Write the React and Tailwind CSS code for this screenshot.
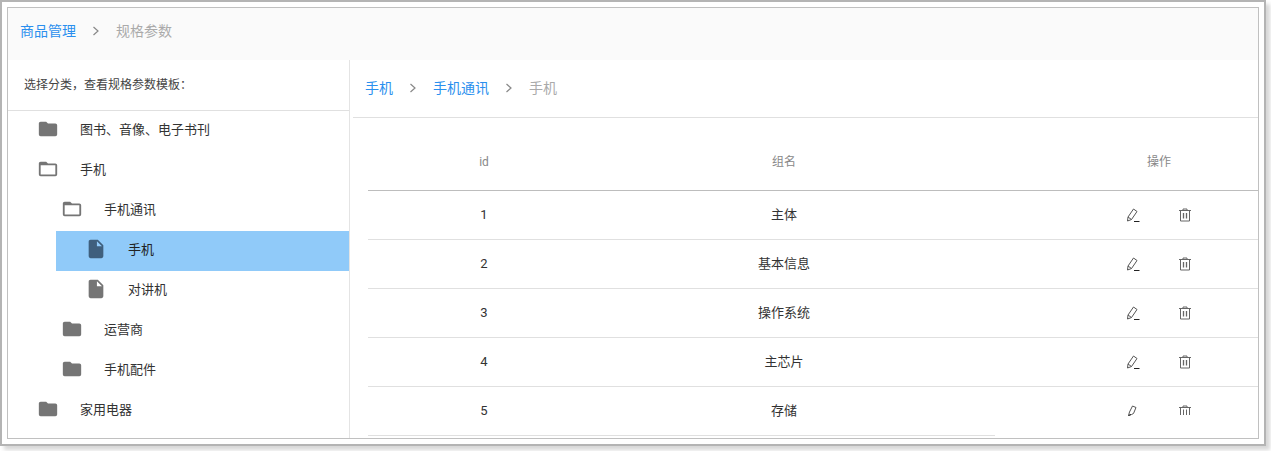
const TREE = [
  { label: "图书、音像、电子书刊", depth: 0, icon: "folder" },
  { label: "手机", depth: 0, icon: "open" },
  { label: "手机通讯", depth: 1, icon: "open" },
  { label: "手机", depth: 2, icon: "file", active: true },
  { label: "对讲机", depth: 2, icon: "file" },
  { label: "运营商", depth: 1, icon: "folder" },
  { label: "手机配件", depth: 1, icon: "folder" },
  { label: "家用电器", depth: 0, icon: "folder" },
];

const ROWS = [
  { id: 1, name: "主体" },
  { id: 2, name: "基本信息" },
  { id: 3, name: "操作系统" },
  { id: 4, name: "主芯片" },
  { id: 5, name: "存储", faded: true },
];

const DEPTH_MARGIN = ["ml-0", "ml-6", "ml-12"];

function TreeIcon({ type, active }) {
  const fill = active ? "#3f5f7d" : "#757575";
  if (type === "file") {
    return (
      <svg width="22" height="22" viewBox="0 0 24 24" fill={fill}>
        <path d="M13 9V3.5L18.5 9M6 2c-1.11 0-2 .89-2 2v16a2 2 0 0 0 2 2h12a2 2 0 0 0 2-2V8l-6-6H6z" />
      </svg>
    );
  }
  if (type === "open") {
    return (
      <svg width="22" height="22" viewBox="0 0 24 24" fill={fill}>
        <path d="M20 18H4V8h16m0-2h-8l-2-2H4c-1.11 0-2 .89-2 2v12a2 2 0 0 0 2 2h16a2 2 0 0 0 2-2V8a2 2 0 0 0-2-2z" />
      </svg>
    );
  }
  return (
    <svg width="22" height="22" viewBox="0 0 24 24" fill={fill}>
      <path d="M10 4H4c-1.11 0-2 .89-2 2v12a2 2 0 0 0 2 2h16a2 2 0 0 0 2-2V8a2 2 0 0 0-2-2h-8l-2-2z" />
    </svg>
  );
}

function PencilIcon({ faded }) {
  if (faded) {
    return (
      <svg width="16" height="16" viewBox="0 0 16 16" fill="none" stroke="#555" strokeWidth="1">
        <path d="M3.5 12.5 4.5 9 7.5 3l3.5 1.5-2.5 6-2 1z" />
        <path d="M3.5 12.5 6 11.5" stroke="#222" />
      </svg>
    );
  }
  return (
    <svg width="16" height="16" viewBox="0 0 16 16" fill="none" stroke="#555" strokeWidth="1">
      <path d="M2.5 14 3 10 8.5 2 12 4.5 6.5 12.5z" />
      <path d="M3 10l3.5 2.5" />
      <path d="M9 14.5h5.5" stroke="#222" />
    </svg>
  );
}

function TrashIcon({ faded }) {
  if (faded) {
    return (
      <svg width="16" height="16" viewBox="0 0 16 16" fill="none" stroke="#666" strokeWidth="1">
        <path d="M2 4.5h12M6 4.5V3h4v1.5" />
        <path d="M3.5 4.5V12M12.5 4.5V12M6.5 6.5V12M9.5 6.5V12" />
      </svg>
    );
  }
  return (
    <svg width="16" height="16" viewBox="0 0 16 16" fill="none" stroke="#666" strokeWidth="1">
      <path d="M2 3.5h12M6 3.5V2h4v1.5" />
      <path d="M3.5 3.5v10.5h9V3.5" />
      <path d="M6.5 6v5.5M9.5 6v5.5" strokeWidth="1.3" />
    </svg>
  );
}

function Sep() {
  return (
    <svg width="8" height="10" viewBox="0 0 8 10" fill="none" stroke="#888" strokeWidth="1.2">
      <path d="M1.5 1 6 5 1.5 9" />
    </svg>
  );
}

export default function App() {
  return (
    <div
      className="h-[451px] w-[1271px] overflow-hidden bg-white text-[13px] text-[#333]"
      style={{ fontFamily: '"Roboto", "Noto Sans CJK SC", sans-serif' }}
    >
      <div className="h-[446px] w-[1266px] border-2 border-[#b4b4b4] bg-white p-[5px] shadow-[4px_4px_4px_#d8d8d8]">
        <div className="flex h-[432px] w-[1252px] flex-col overflow-hidden border border-[#c0c0c0]">
          {/* HEADER */}
          <div className="flex h-[52px] shrink-0 items-center bg-[#fafafa] pb-1.5 pl-3 text-sm">
            <span className="text-[#2a8fee]">商品管理</span>
            <span className="mx-4 flex"><Sep /></span>
            <span className="text-[#aaa]">规格参数</span>
          </div>

          <div className="flex min-h-0 flex-1">
            {/* TREE */}
            <div className="w-[342px] shrink-0 border-r border-[#e4e4e4]">
              <div className="flex h-[51px] items-center border-b border-[#e0e0e0] pl-4 text-xs text-[#444]">
                选择分类，查看规格参数模板：
              </div>
              {TREE.map((item, i) => (
                <div key={i} className={DEPTH_MARGIN[item.depth]}>
                  <div className={`flex h-10 items-center pb-1 pl-[29px] ${item.active ? "bg-[#90caf9] text-[#222]" : ""}`}>
                    <TreeIcon type={item.icon} active={item.active} />
                    <span className="ml-[21px] leading-none">{item.label}</span>
                  </div>
                </div>
              ))}
            </div>

            {/* TABLE */}
            <div className="min-w-0 flex-1 pl-[3px]">
              <div className="flex h-[58px] items-center border-b border-[#e0e0e0] pb-0.5 pl-3 text-sm">
                <span className="text-[#2a8fee]">手机</span>
                <span className="mx-4 flex"><Sep /></span>
                <span className="text-[#2a8fee]">手机通讯</span>
                <span className="mx-4 flex"><Sep /></span>
                <span className="text-[#aaa]">手机</span>
              </div>
              <div className="pl-[15px]">
                <div className="grid h-[73px] w-[990px] grid-cols-[232px_368px_390px] items-center border-b border-[#bdbdbd] pt-4 text-center text-xs text-[#888]">
                  <span>id</span>
                  <span>组名</span>
                  <span className="pr-2">操作</span>
                </div>
                {ROWS.map((row) => (
                  <div key={row.id} className="h-[49px] w-[990px]">
                    <div className="grid h-12 grid-cols-[232px_368px_390px] items-center text-center">
                      <span>{row.id}</span>
                      <span>{row.name}</span>
                      <span className="flex justify-center gap-9 pr-2">
                        <PencilIcon faded={row.faded} />
                        <TrashIcon faded={row.faded} />
                      </span>
                    </div>
                    <div className={`h-px bg-[#e0e0e0] ${row.faded ? "w-[627px]" : "w-full"}`} />
                  </div>
                ))}
              </div>
            </div>
          </div>
        </div>
      </div>
    </div>
  );
}
